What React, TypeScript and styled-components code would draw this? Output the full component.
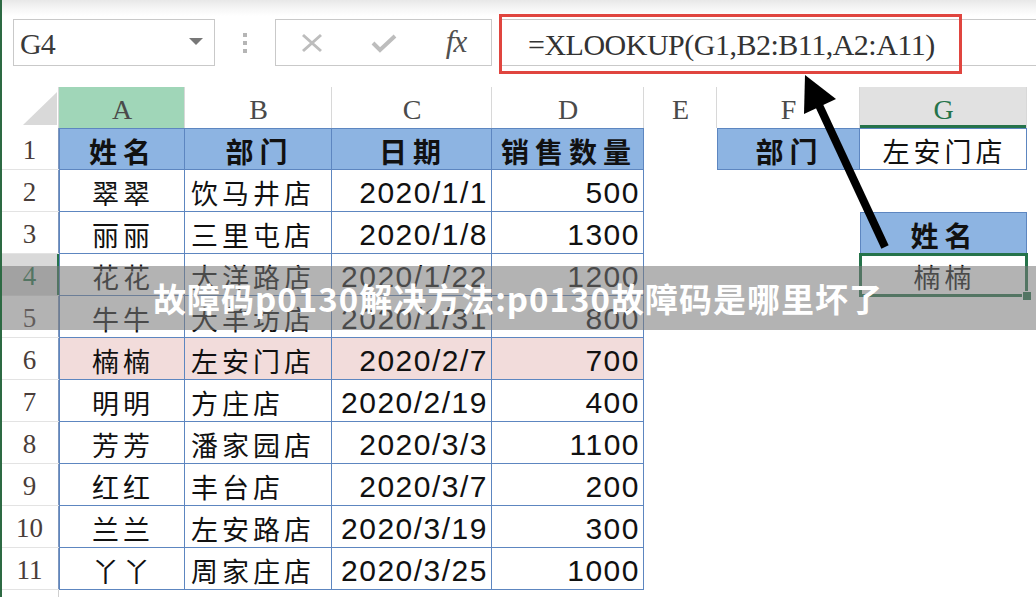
import { Fragment } from "react";
import styled, { createGlobalStyle } from "styled-components";

const GREEN = "#25734a";
const BLUE_LINE = "#5d86c0";
const BLUE_FILL = "#8db4e2";
const PINK = "#f2dcdb";
const CJK = `"Noto Sans CJK SC", "Noto Sans", sans-serif`;

const GlobalStyle = createGlobalStyle`
  html, body { margin: 0; padding: 0; background: #ffffff; }
  #root { width: 1036px; height: 597px; }
`;

const Page = styled.div`
  position: relative;
  width: 1036px;
  height: 597px;
  box-sizing: border-box;
  border-left: 2px solid #2d6a43;
  overflow: hidden;
  background: #fff;
  font-family: "Liberation Serif", "Times New Roman", serif;
`;

// formula bar
const TopBar = styled.div`
  display: flex;
  align-items: flex-start;
  height: 87px;
  box-sizing: border-box;
  padding: 19px 0 0 11px;
  background: linear-gradient(180deg, #e8e8e8 0px, #f5f5f5 8px, #ffffff 16px);
`;

const NameBox = styled.div`
  display: flex;
  align-items: center;
  justify-content: space-between;
  width: 202px;
  height: 47px;
  box-sizing: border-box;
  border: 1px solid #c9c9c9;
  padding: 3px 11px 0 6px;
  background: #fff;
  font-family: "Liberation Serif", serif;
  font-size: 30px;
  color: #3a3a3a;
  letter-spacing: -1px;
`;

const DropArrow = styled.span`
  width: 0;
  height: 0;
  border-left: 7px solid transparent;
  border-right: 7px solid transparent;
  border-top: 7px solid #777;
  margin-top: -5px;
`;

const Grip = styled.div`
  display: flex;
  flex-direction: column;
  gap: 4px;
  margin: 14px 28px 0;

  span {
    width: 4px;
    height: 4px;
    background: #b5b5b5;
  }
`;

const FxBox = styled.div`
  display: grid;
  grid-template-columns: repeat(3, 72px);
  align-items: center;
  justify-items: center;
  width: 217px;
  height: 47px;
  box-sizing: border-box;
  border: 1px solid #c9c9c9;
  background: #fff;
`;

const FxLabel = styled.span`
  font-style: italic;
  font-size: 31px;
  color: #505050;
  letter-spacing: -1px;
  margin-top: -2px;
`;

const FormulaBar = styled.div`
  position: relative;
  flex: 1;
  display: flex;
  align-items: center;
  height: 47px;
  margin-left: 7px;
  box-sizing: border-box;
  border-top: 1px solid #c9c9c9;
  border-bottom: 1px solid #c9c9c9;
  padding: 4px 0 0 29px;
  font-family: "Liberation Serif", serif;
  font-size: 30px;
  letter-spacing: -0.5px;
  color: #333;
  white-space: nowrap;
`;

const RedFrame = styled.div`
  position: absolute;
  left: 0;
  top: -6px;
  width: 463px;
  height: 60px;
  box-sizing: border-box;
  border: 3px solid #e0453f;
`;

// grid
const Sheet = styled.div`
  display: grid;
  grid-template-columns: 57px 126px 147px 160px 152px 73px 143px 167px 1fr;
  grid-template-rows: 41px repeat(12, 42px);
`;

const Corner = styled.div`
  display: flex;
  justify-content: flex-end;
  align-items: flex-end;
  padding: 0 2px 3px 0;
  box-shadow: inset -1px 0 0 #d8d8d8;
`;

const CornerMark = styled.span`
  width: 34px;
  height: 33px;
  background: #d9d9d9;
  clip-path: polygon(100% 0, 100% 100%, 0 100%);
`;

const ColHead = styled.div<{ $tone?: "mint" | "current" }>`
  display: flex;
  align-items: center;
  justify-content: center;
  padding-top: 4px;
  font-size: 28px;
  color: ${({ $tone }) => ($tone === "current" ? GREEN : "#4a4a4a")};
  background: ${({ $tone }) =>
    $tone === "mint" ? "#a0d6b8" : $tone === "current" ? "#e1e1e1" : "#fff"};
  box-shadow: inset -1px 0 0 #d8d8d8
    ${({ $tone }) => ($tone === "current" ? `, inset 0 -3px 0 ${GREEN}` : "")};
`;

const RowHead = styled.div<{ $current?: boolean; $framed?: boolean }>`
  display: flex;
  align-items: center;
  justify-content: center;
  padding: 3px 2px 0 0;
  font-size: 27px;
  color: ${({ $current }) => ($current ? GREEN : "#4a3d39")};
  background: ${({ $current }) => ($current ? "#d9d9d9" : "#fff")};
  box-shadow: inset 0 -1px 0 #e3e3e3,
    ${({ $current, $framed }) =>
      $current ? `inset -2px 0 0 ${GREEN}` : `inset -1px 0 0 ${$framed ? "#7f97bd" : "#d0d0d0"}`};
`;

const frame = (lines = "") => {
  const parts: string[] = [];
  if (lines.includes("t")) parts.push(`inset 0 1px 0 ${BLUE_LINE}`);
  if (lines.includes("r")) parts.push(`inset -1px 0 0 ${BLUE_LINE}`);
  if (lines.includes("b")) parts.push(`inset 0 -1px 0 ${BLUE_LINE}`);
  if (lines.includes("l")) parts.push(`inset 1px 0 0 ${BLUE_LINE}`);
  return parts.length ? parts.join(", ") : "none";
};

type Align = "left" | "center" | "right";

const Cell = styled.div<{
  $fill?: string;
  $align?: Align;
  $lines?: string;
  $num?: boolean;
  $bold?: boolean;
  $picked?: boolean;
}>`
  position: relative;
  display: flex;
  align-items: center;
  justify-content: ${({ $align }) =>
    $align === "left" ? "flex-start" : $align === "right" ? "flex-end" : "center"};
  padding: 3px 4px 0 6px;
  background: ${({ $fill }) => $fill || "transparent"};
  box-shadow: ${({ $lines }) => frame($lines)};
  font-family: ${({ $num }) => ($num ? `"Liberation Sans", Arial, sans-serif` : CJK)};
  font-size: ${({ $num, $bold }) => ($num ? "30px" : $bold ? "28px" : "27px")};
  letter-spacing: ${({ $num, $bold }) => ($num ? "1.5px" : $bold ? "6px" : "4px")};
  font-weight: ${({ $bold }) => ($bold ? 700 : 400)};
  color: #111;
  white-space: nowrap;

  ${({ $picked }) =>
    $picked &&
    `
    outline: 3px solid ${GREEN};
    outline-offset: -2px;
    &::after {
      content: "";
      position: absolute;
      right: -5px;
      bottom: -5px;
      width: 8px;
      height: 8px;
      background: ${GREEN};
      border: 1px solid #fff;
    }
  `}
`;

const ArrowLayer = styled.svg`
  position: absolute;
  left: -2px;
  top: 0;
  pointer-events: none;
`;

const Banner = styled.div`
  position: absolute;
  left: -2px;
  right: 0;
  top: 266px;
  height: 64px;
  display: flex;
  align-items: center;
  justify-content: center;
  background: rgba(120, 120, 120, 0.56);
  color: #fff;
  font-family: ${CJK};
  font-weight: 700;
  font-size: 33px;
  letter-spacing: 1px;
  white-space: nowrap;
`;

const columns = ["A", "B", "C", "D", "E", "F", "G", "H"];

const records = [
  ["姓名", "部门", "日期", "销售数量"],
  ["翠翠", "饮马井店", "2020/1/1", "500"],
  ["丽丽", "三里屯店", "2020/1/8", "1300"],
  ["花花", "大洋路店", "2020/1/22", "1200"],
  ["牛牛", "大羊坊店", "2020/1/31", "800"],
  ["楠楠", "左安门店", "2020/2/7", "700"],
  ["明明", "方庄店", "2020/2/19", "400"],
  ["芳芳", "潘家园店", "2020/3/3", "1100"],
  ["红红", "丰台店", "2020/3/7", "200"],
  ["兰兰", "左安路店", "2020/3/19", "300"],
  ["丫丫", "周家庄店", "2020/3/25", "1000"],
];

const bodyAlign: Align[] = ["center", "left", "right", "right"];

type Extra = { text: string; fill?: string; bold?: boolean; lines?: string; picked?: boolean };

// lookup block in F:G
const extras: Record<number, Record<string, Extra>> = {
  1: {
    F: { text: "部门", fill: BLUE_FILL, bold: true, lines: "tlrb" },
    G: { text: "左安门店", lines: "trb" },
  },
  3: { G: { text: "姓名", fill: BLUE_FILL, bold: true, lines: "tlrb" } },
  4: { G: { text: "楠楠", picked: true } },
};

const App = () => {
  return (
    <>
      <GlobalStyle />
      <Page>
        <TopBar>
          <NameBox>
            G4
            <DropArrow />
          </NameBox>
          <Grip>
            <span />
            <span />
            <span />
          </Grip>
          <FxBox>
            <svg width="24" height="20" viewBox="0 0 24 20">
              <path d="M3 2 L21 18 M21 2 L3 18" stroke="#bdbdbd" strokeWidth="3" fill="none" />
            </svg>
            <svg width="26" height="20" viewBox="0 0 26 20">
              <path d="M2 10 L9 17 L24 3" stroke="#bdbdbd" strokeWidth="4" fill="none" />
            </svg>
            <FxLabel>fx</FxLabel>
          </FxBox>
          <FormulaBar>
            =XLOOKUP(G1,B2:B11,A2:A11)
            <RedFrame />
          </FormulaBar>
        </TopBar>

        <Sheet>
          <Corner>
            <CornerMark />
          </Corner>
          {columns.map((c) => (
            <ColHead key={c} $tone={c === "A" ? "mint" : c === "G" ? "current" : undefined}>
              {c === "H" ? "" : c}
            </ColHead>
          ))}

          {Array.from({ length: 12 }, (_, i) => {
            const r = i + 1;
            const rec = records[i];
            const extra = extras[r] || {};
            return (
              <Fragment key={r}>
                <RowHead $current={r === 4} $framed={r <= 11}>
                  {rec ? r : ""}
                </RowHead>
                {rec
                  ? rec.map((v, c) => (
                      <Cell
                        key={c}
                        $fill={r === 1 ? BLUE_FILL : r === 6 ? PINK : undefined}
                        $align={r === 1 ? "center" : bodyAlign[c]}
                        $num={r > 1 && c >= 2}
                        $bold={r === 1}
                        $lines={(c === 0 ? "lrb" : "rb") + (r === 1 ? "t" : "")}
                      >
                        {v}
                      </Cell>
                    ))
                  : [0, 1, 2, 3].map((c) => <Cell key={c} />)}
                {["E", "F", "G", "H"].map((col) => {
                  const x = extra[col];
                  return x ? (
                    <Cell
                      key={col}
                      $fill={x.fill}
                      $bold={x.bold}
                      $lines={x.lines}
                      $picked={x.picked}
                    >
                      {x.text}
                    </Cell>
                  ) : (
                    <Cell key={col} />
                  );
                })}
              </Fragment>
            );
          })}
        </Sheet>

        <ArrowLayer width="1036" height="597" viewBox="0 0 1036 597">
          <line x1="885" y1="247" x2="818" y2="103" stroke="#000" strokeWidth="8" />
          <polygon points="805,75 836,99 804,114" fill="#000" />
        </ArrowLayer>

        <Banner>故障码p0130解决方法:p0130故障码是哪里坏了</Banner>
      </Page>
    </>
  );
};

export default App;
